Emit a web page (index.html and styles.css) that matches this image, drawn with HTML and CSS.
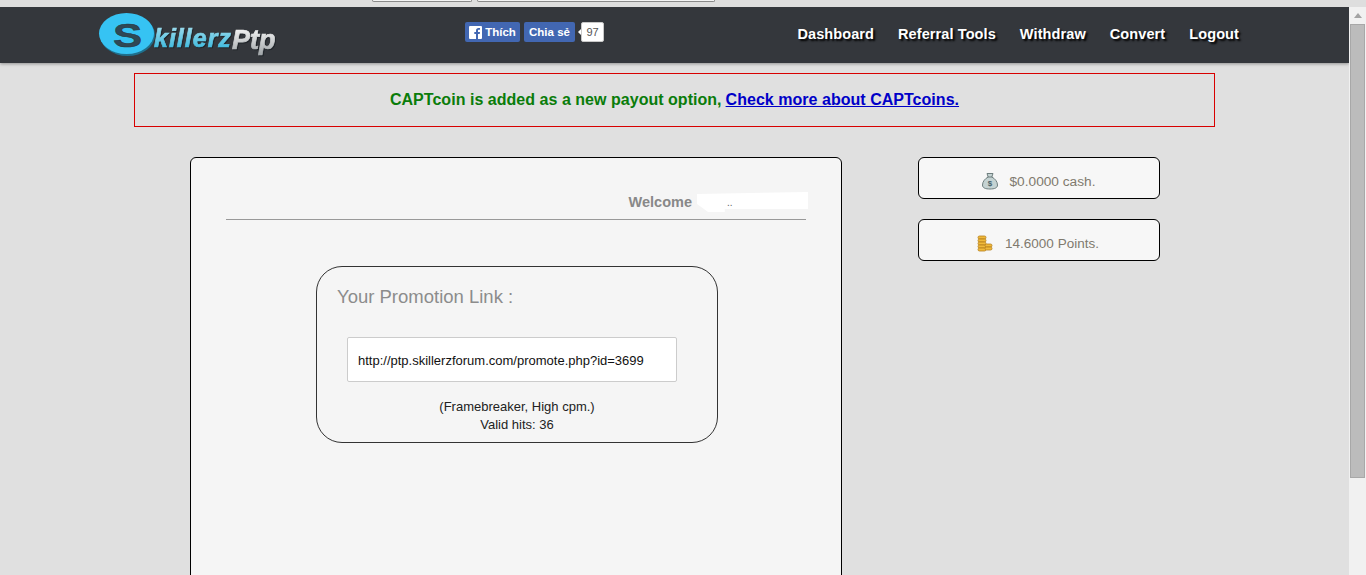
FILE: index.html
```html
<!DOCTYPE html>
<html lang="en">
<head>
<meta charset="utf-8">
<title>SkillerzPtp</title>
<link rel="stylesheet" href="styles.css">
</head>
<body>
<div class="chrome"><span class="chrome-a"></span><span class="chrome-b"></span></div>
<div class="window">
  <div class="page">
    <header class="header">
      <a class="logo" href="#">
        <svg width="190" height="52" viewBox="0 0 190 52">
          <defs>
            <linearGradient id="cy" x1="0" y1="0" x2="0" y2="1"><stop offset="0" stop-color="#a8dfee"/><stop offset="1" stop-color="#2fb5dd"/></linearGradient>
            <linearGradient id="wh" x1="0" y1="0" x2="0" y2="1"><stop offset="0" stop-color="#ffffff"/><stop offset="1" stop-color="#a0a5a8"/></linearGradient>
          </defs>
          <ellipse cx="29.500" cy="26" rx="27.500" ry="21" fill="#1f6f8c"/>
          <ellipse cx="28.500" cy="24.500" rx="27.500" ry="20.500" fill="#36c3f3"/>
          <text class="logo-s" transform="translate(15 38) scale(1.15 .88)" x="0" y="0">S</text>
          <text class="logo-k" x="56" y="38" fill="url(#cy)" stroke="url(#cy)">killerz</text>
          <text class="logo-p" x="134" y="40" fill="url(#wh)" stroke="url(#wh)">Ptp</text>
        </svg>
      </a>
      <div class="social">
        <a class="fb fb-like" href="#"><svg class="fb-icon" width="13" height="13" viewBox="0 0 13 13"><rect width="13" height="13" rx="1" fill="#fff"/><path d="M9 13V8h1.700l.3-2H9V4.800c0-.6.200-1 1-1h1V2.100C10.700 2 10.200 2 9.600 2 8 2 7 3 7 4.600V6H5.300v2H7v5z" fill="#4267b2"/></svg>Thích</a>
        <a class="fb fb-share" href="#">Chia sẻ</a>
        <span class="count">97</span>
      </div>
      <nav class="nav">
        <a href="#">Dashboard</a>
        <a href="#">Referral Tools</a>
        <a href="#">Withdraw</a>
        <a href="#">Convert</a>
        <a href="#">Logout</a>
      </nav>
    </header>
    <div class="notice"><span class="notice-green">CAPTcoin is added as a new payout option,</span> <a href="#">Check more about CAPTcoins.</a></div>
    <div class="content">
      <main class="card">
        <div class="welcome"><b>Welcome</b><span class="mask">..</span></div>
        <section class="promo">
          <h2>Your Promotion Link :</h2>
          <div class="link">http://ptp.skillerzforum.com/promote.php?id=3699</div>
          <p>(Framebreaker, High cpm.)<br>Valid hits: 36</p>
        </section>
      </main>
      <aside class="side">
        <div class="stat stat-cash">
          <svg width="18" height="18" viewBox="0 0 18 18"><path d="M6 1.500h6L10.800 5c3 1.500 5.700 4.500 5.700 8 0 3-3 4-7.500 4S1.500 16 1.500 13c0-3.500 2.700-6.500 5.700-8z" fill="#c5d3d3" stroke="#6f7f7f"/><path d="M6.800 5h4.400" stroke="#6f7f7f"/><text class="dollar" x="9" y="14" text-anchor="middle">$</text></svg>
          <span>$0.0000 cash.</span>
        </div>
        <div class="stat stat-points">
          <svg width="16" height="17" viewBox="0 0 16 17"><g fill="#f0b93a" stroke="#b57f1c" stroke-width=".8"><rect x="1" y="1" width="8" height="3" rx="1.500"/><rect x="1" y="4" width="8" height="3" rx="1.500"/><rect x="1" y="7" width="8" height="3" rx="1.500"/><rect x="1" y="10" width="8" height="3" rx="1.500"/><rect x="1" y="13" width="8" height="3" rx="1.500"/><rect x="8" y="9" width="7" height="3" rx="1.500"/><rect x="8" y="12" width="7" height="3" rx="1.500"/></g></svg>
          <span>14.6000 Points.</span>
        </div>
      </aside>
    </div>
  </div>
  <div class="scrollbar">
    <div class="arrow"></div>
    <div class="thumb"></div>
  </div>
</div>
</body>
</html>
```
FILE: styles.css
```css
* { box-sizing: border-box; }
html, body { margin: 0; height: 100%; overflow: hidden; }
body { display: flex; flex-direction: column; background: #e0e0e0; font-family: "Liberation Sans", Arial, sans-serif; }
a { text-decoration: none; }

.chrome { flex: none; height: 7px; background: #dedede; display: flex; padding-left: 372px; gap: 5px; }
.chrome-a, .chrome-b { height: 2px; border: 1px solid #8a8a8a; border-top: 0; border-radius: 0 0 3px 3px; background: #f4f4f4; }
.chrome-a { width: 100px; }
.chrome-b { width: 238px; }

.window { flex: 1; min-height: 0; display: flex; }
.page { flex: 1; min-width: 0; overflow: hidden; }

.header { height: 56px; background: #34373c; display: flex; align-items: flex-start; padding: 0 110px 0 98px; box-shadow: 0 1px 3px rgba(0,0,0,.35); }
.logo { width: 367px; flex: none; height: 52px; margin-top: 2px; }
.logo svg { display: block; overflow: visible; }
.logo-s { font-family: "Liberation Sans", sans-serif; font-weight: 700; font-size: 38px; fill: #2f4855; stroke: #26363e; stroke-width: .6; }
.logo-k, .logo-p { font-family: "Liberation Sans", sans-serif; font-weight: 700; font-style: italic; stroke-width: .7; filter: drop-shadow(1px 1px 0 #20252a); }
.logo-k { font-size: 25px; letter-spacing: 1px; }
.logo-p { font-size: 27px; }

.social { display: flex; align-items: center; margin-top: 15px; }
.fb { height: 20px; display: flex; align-items: center; justify-content: center; gap: 3px; background: #4267b2; border-radius: 2px; color: #fff; font-size: 11.500px; font-weight: 700; }
.fb-like { width: 55px; }
.fb-icon { flex: none; }
.fb-share { width: 51px; margin-left: 4px; }
.count { position: relative; margin-left: 6px; width: 23px; height: 20px; background: #fff; border: 1px solid #c8c8c8; border-radius: 2px; font-size: 11px; color: #555; display: flex; align-items: center; justify-content: center; }
.count::before { content: ""; position: absolute; left: -4px; top: 6px; border: 3px solid transparent; border-left: 0; border-right: 3px solid #fff; }

.nav { margin-left: auto; margin-top: 19px; display: flex; gap: 24px; }
.nav a { color: #fff; font-size: 14.500px; letter-spacing: .1px; font-weight: 700; line-height: 17px; text-shadow: 2px 2px 2px #000; }

.notice { width: 1081px; height: 54px; margin: 10px 0 0 134px; border: 1px solid #d80000; display: flex; align-items: center; justify-content: center; gap: 4px; font-size: 16px; letter-spacing: .03px; font-weight: 700; }
.notice-green { color: #0a7c0a; }
.notice a { color: #0000c8; text-decoration: underline; }

.content { display: flex; align-items: flex-start; margin: 30px 0 0 190px; }
.card { width: 652px; height: 500px; flex: none; background: #f5f5f5; border: 1px solid #000; border-radius: 6px; padding: 0 35px; }
.welcome { height: 62px; width: 580px; border-bottom: 1px solid #999; display: flex; justify-content: flex-end; align-items: flex-start; padding-top: 36px; color: #888; font-size: 14.500px; line-height: 17px; }
.mask { width: 111px; height: 20px; margin: -2px -2px 0 5px; background: #fff; color: #666; font-size: 10px; line-height: 22px; padding-left: 30px; clip-path: polygon(0 10%, 100% 0, 100% 85%, 25% 85%, 25% 100%, 10% 100%, 0 60%); }
.promo { width: 402px; height: 177px; margin: 46px 0 0 90px; border: 1px solid #333; border-radius: 26px; padding: 0 0 0 20px; }
.promo h2 { margin: 19px 0 0; font-size: 18.500px; font-weight: 400; line-height: 22px; color: #8c8c8c; }
.link { width: 330px; height: 45px; margin: 29px 0 0 10px; background: #fff; border: 1px solid #ccc; border-radius: 2px; padding: 1px 0 0 10px; display: flex; align-items: center; font-size: 13px; color: #111; }
.promo p { margin: 16px 0 0 -20px; text-align: center; font-size: 13px; line-height: 18px; color: #222; }

.side { margin-left: 76px; display: flex; flex-direction: column; gap: 20px; width: 242px; }
.stat { height: 42px; background: #f7f7f7; border: 1px solid #000; border-radius: 6px; display: flex; align-items: center; justify-content: center; padding: 7px 2px 0 0; gap: 11px; font-size: 13.700px; color: #807a6e; }
.stat svg { margin-top: -1px; }
.stat-points { font-size: 13.500px; gap: 12px; }

.dollar { font-family: "Liberation Sans", sans-serif; font-size: 8px; font-weight: 700; fill: #47616a; }

.scrollbar { width: 17px; flex: none; background: #f1f1f1; }
.arrow { height: 17px; display: flex; align-items: center; justify-content: center; }
.arrow::before { content: ""; border: 4px solid transparent; border-top: 0; border-bottom: 5px solid #a3a3a3; }
.thumb { height: 454px; margin: 0 1px; background: #bcbcbc; border: 1px solid #a8a8a8; }
```
